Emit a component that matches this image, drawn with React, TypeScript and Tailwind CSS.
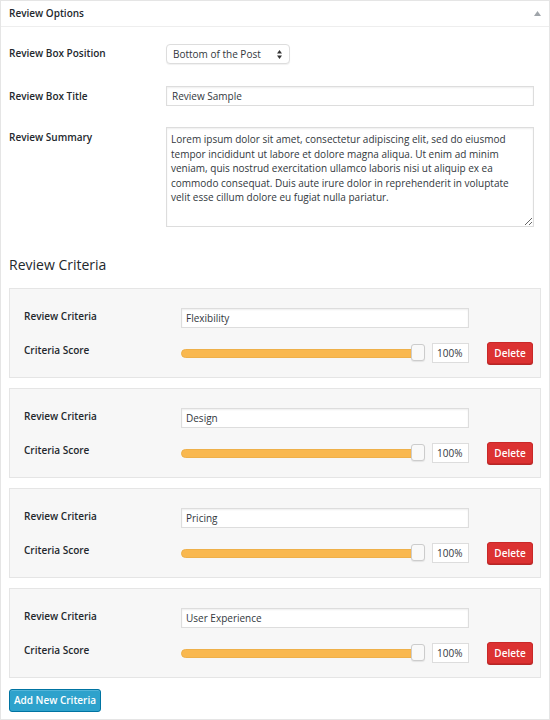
import React from "react";

const font = { fontFamily: '"Open Sans", "Noto Sans", sans-serif' };

const lorem =
  "Lorem ipsum dolor sit amet, consectetur adipiscing elit, sed do eiusmod\ntempor incididunt ut labore et dolore magna aliqua. Ut enim ad minim\nveniam, quis nostrud exercitation ullamco laboris nisi ut aliquip ex ea\ncommodo consequat. Duis aute irure dolor in reprehenderit in voluptate\nvelit esse cillum dolore eu fugiat nulla pariatur.";

function Criteria({ name }: { name: string }) {
  return (
    <div className="h-[90px] border border-[#e5e5e5] bg-[#f7f7f7] pl-[14px] pt-[19px]">
      <div className="flex items-start">
        <div className="w-[157px] text-[10px] font-semibold leading-[16px] text-[#23282d]">
          Review Criteria
        </div>
        <div className="flex h-[20px] w-[288px] items-center border border-[#dddddd] bg-white pl-[4px] text-[10px] text-[#32373c] shadow-[inset_0_1px_2px_rgba(0,0,0,0.07)]">
          {name}
        </div>
      </div>
      <div className="mt-[14px] flex items-center">
        <div className="-mt-[6px] w-[157px] text-[10px] font-semibold leading-[16px] text-[#23282d]">
          Criteria Score
        </div>
        <div className="relative flex h-[20px] w-[244px] items-center">
          <div className="h-[9px] w-[236px] rounded-full border border-[#eeb04a] bg-[#f9b84f]" />
          <div className="absolute right-[0px] top-[1px] h-[17px] w-[14px] rounded-[3px] border border-[#cccccc] bg-[#f9f9f9] shadow-[0_1px_1px_rgba(0,0,0,0.08)]" />
        </div>
        <div className="ml-[7px] flex h-[20px] w-[37px] items-center border border-[#dddddd] bg-white pl-[4px] text-[10px] text-[#32373c]">
          100%
        </div>
        <div className="ml-[18px] flex h-[22px] w-[46px] items-center justify-center rounded-[3px] border border-[#c92828] bg-[#dc3232] text-[10px] font-semibold text-white shadow-[0_1px_0_#b52727]">
          Delete
        </div>
      </div>
    </div>
  );
}

export default function App() {
  return (
    <div style={font} className="h-[720px] w-[550px] bg-white">
      <div className="h-[720px] w-[550px] border border-[#e5e5e5] bg-white">
        <div className="flex h-[26px] items-center justify-between border-b border-[#eeeeee] pl-[8px] pr-[8px]">
          <span className="text-[10px] font-semibold text-[#23282d]">Review Options</span>
          <svg width="7" height="5" viewBox="0 0 7 5">
            <path d="M3.5 0 L7 5 L0 5 Z" fill="#a0a5aa" />
          </svg>
        </div>
        <div className="px-[8px] pt-[17px]">
          <div className="flex items-start">
            <div className="mt-[1px] w-[157px] text-[10px] font-semibold leading-[16px] text-[#23282d]">
              Review Box Position
            </div>
            <div className="flex h-[20px] w-[124px] items-center justify-between rounded-[4px] border border-[#dddddd] bg-white pl-[6px] pr-[7px] text-[10px] text-[#32373c] shadow-[0_1px_1px_rgba(0,0,0,0.06)]">
              <span>Bottom of the Post</span>
              <svg width="5" height="9" viewBox="0 0 5 9">
                <path d="M2.5 0 L5 3.5 L0 3.5 Z" fill="#333" />
                <path d="M2.5 9 L5 5.5 L0 5.5 Z" fill="#333" />
              </svg>
            </div>
          </div>
          <div className="mt-[22px] flex items-start">
            <div className="mt-[2px] w-[157px] text-[10px] font-semibold leading-[16px] text-[#23282d]">
              Review Box Title
            </div>
            <div className="flex h-[20px] w-[368px] items-center border border-[#dddddd] bg-white pl-[5px] text-[10px] text-[#32373c] shadow-[inset_0_1px_2px_rgba(0,0,0,0.07)]">
              Review Sample
            </div>
          </div>
          <div className="mt-[21px] flex items-start">
            <div className="mt-[2px] w-[157px] text-[10px] font-semibold leading-[16px] text-[#23282d]">
              Review Summary
            </div>
            <textarea
              style={font}
              readOnly
              value={lorem}
              className="h-[100px] w-[368px] resize-y overflow-hidden border border-[#dddddd] bg-white px-[4px] pt-[4px] text-[10px] leading-[14.5px] text-[#32373c] shadow-[inset_0_1px_2px_rgba(0,0,0,0.07)] outline-none"
            />
          </div>
          <div className="mt-[28px] text-[14px] leading-[20px] text-[#23282d]">Review Criteria</div>
          <div className="mt-[13px] flex w-[532px] flex-col gap-[10px]">
            <Criteria name="Flexibility" />
            <Criteria name="Design" />
            <Criteria name="Pricing" />
            <Criteria name="User Experience" />
          </div>
          <div className="mt-[11px] flex h-[23px] w-[92px] items-center justify-center rounded-[3px] border border-[#0074a2] bg-[#2ea2cc] text-[10px] font-semibold text-white shadow-[inset_0_1px_0_rgba(120,200,230,0.5)]">
            Add New Criteria
          </div>
        </div>
      </div>
    </div>
  );
}
